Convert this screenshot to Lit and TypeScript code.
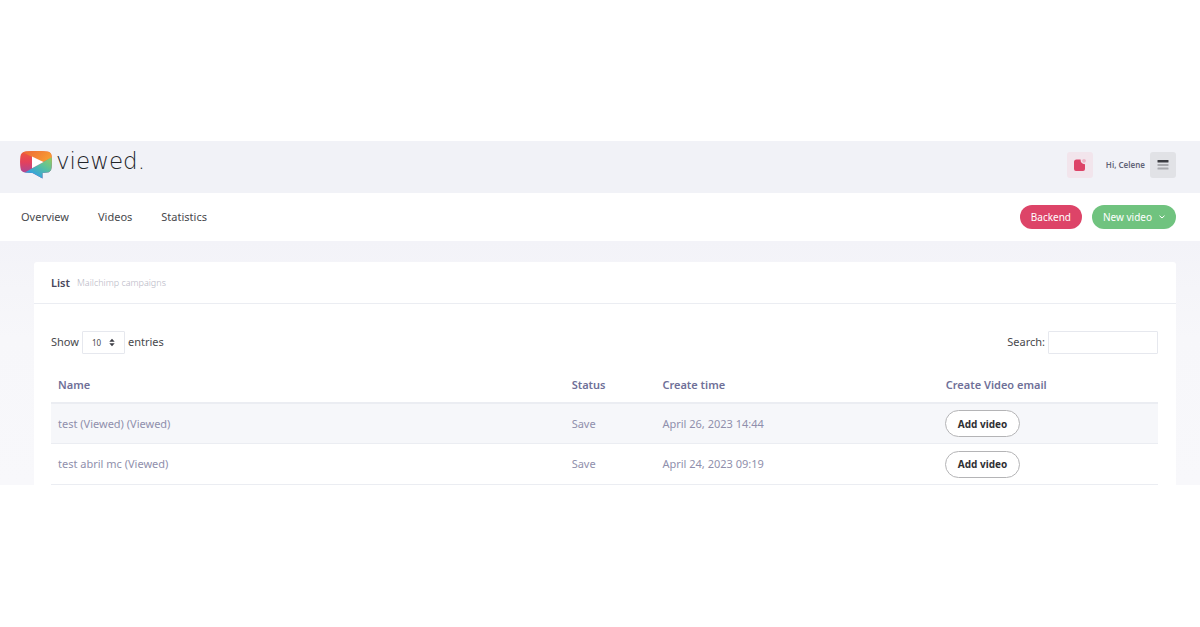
import { LitElement, html, css, svg } from "lit";
import { customElement, state } from "lit/decorators.js";

interface Campaign {
  name: string;
  status: string;
  created: string;
}

const logo = svg`
  <svg class="mark" viewBox="0 0 32 28" width="32" height="28" aria-hidden="true">
    <defs>
      <clipPath id="bubble">
        <path d="M6 0.6 Q16 -0.6 26 0.4 Q31.5 0.6 31.6 5 Q32.2 11 31.6 16.5 Q31.2 21.2 27 21.6 L22.5 22 L22.5 27.6 L12.5 21.9 L5 21.5 Q0.8 21 0.4 16.5 Q-0.3 11 0.4 5.5 Q0.8 1.2 6 0.6 Z" />
      </clipPath>
      <linearGradient id="left" x1="0" y1="0" x2="0" y2="1">
        <stop offset="0" stop-color="#ee5a3a" />
        <stop offset="0.4" stop-color="#e4405c" />
        <stop offset="0.8" stop-color="#a8489a" />
      </linearGradient>
      <linearGradient id="top" x1="0" y1="0" x2="1" y2="0.3">
        <stop offset="0" stop-color="#ec6236" />
        <stop offset="1" stop-color="#f79a33" />
      </linearGradient>
      <linearGradient id="bottom" x1="1" y1="0" x2="0.2" y2="1">
        <stop offset="0" stop-color="#9bcb5b" />
        <stop offset="0.4" stop-color="#5cc29a" />
        <stop offset="0.8" stop-color="#35a3dc" />
      </linearGradient>
    </defs>
    <g clip-path="url(#bubble)">
      <rect width="32" height="28" fill="url(#left)" />
      <path d="M0 0 H32 V6.5 L23 11 L3 1.5 Z" fill="url(#top)" />
      <path d="M32 6 L4 22 L12 28 H32 Z" fill="url(#bottom)" />
    </g>
    <path d="M12 5.5 L23.5 11 L12 17.3 Z" fill="#fff" />
  </svg>`;

@customElement("app-root")
export class AppRoot extends LitElement {
  @state() private campaigns: Campaign[] = [
    { name: "test (Viewed) (Viewed)", status: "Save", created: "April 26, 2023 14:44" },
    { name: "test abril mc (Viewed)", status: "Save", created: "April 24, 2023 09:19" },
  ];

  static styles = css`
    :host {
      display: block;
      padding: 141px 0;
      background: #fff;
      color: #48484c;
      font: 11px/16px "Noto Sans", "Open Sans", sans-serif;
    }
    * { box-sizing: border-box; }
    button, input, select { font: inherit; margin: 0; }
    .top {
      display: flex;
      align-items: center;
      justify-content: space-between;
      height: 52px;
      padding: 0 24px 4px 20px;
      background: #f1f2f7;
    }
    .brand {
      display: flex;
      align-items: center;
      gap: 4px;
      height: 32px;
      color: #222328;
      text-decoration: none;
    }
    .mark { display: block; }
    .word {
      padding-bottom: 8px;
      font: 200 23px/24px "DejaVu Sans Light", "DejaVu Sans", sans-serif;
    }
    .user { display: flex; align-items: center; gap: 5px; }
    .tile {
      display: grid;
      place-items: center;
      width: 26px;
      height: 26px;
      padding: 0;
      border: 0;
      border-radius: 3px;
      background: #e1e2e6;
    }
    .alert { margin-right: 8px; background: #f2e5ec; }
    .hello { color: #626477; font-size: 8px; font-weight: 600; }
    .bar {
      display: flex;
      align-items: center;
      justify-content: space-between;
      height: 48px;
      padding: 0 24px 0 21px;
    }
    .links { display: flex; gap: 29px; }
    .links a { color: #48484c; text-decoration: none; }
    .actions { display: flex; gap: 10px; }
    .pill {
      display: flex;
      align-items: center;
      gap: 7px;
      height: 24px;
      padding: 0 11px;
      border: 0;
      border-radius: 12px;
      color: #fff;
      background: #dd4468;
      font-size: 10px;
    }
    .green { background: #70c37f; }
    .content {
      padding: 21px 24px 0 34px;
      background: linear-gradient(#f3f3f8, #f7f7fa 40%, #f8f8fb);
    }
    .card { border-radius: 3px 3px 0 0; background: #fff; }
    .title {
      display: flex;
      align-items: center;
      gap: 7px;
      height: 42px;
      padding: 0 17px;
      border-bottom: 1px solid #ebedf2;
    }
    h1 { margin: 0; color: #48465b; font-size: 11px; line-height: 16px; font-weight: 600; }
    .sub { color: #b5b5c3; font-size: 9px; font-weight: 300; }
    .body { padding: 27px 18px 0 17px; }
    .tools { display: flex; justify-content: space-between; }
    .tools label { display: flex; align-items: center; gap: 3px; }
    .tools label > span:not(.select) { padding-bottom: 2px; }
    .select { position: relative; display: flex; }
    select, input {
      height: 23px;
      border: 1px solid #e6e8ee;
      border-radius: 1px;
      background: #fff;
      color: #48484c;
    }
    select { appearance: none; width: 43px; padding: 0 0 0 9px; font-size: 8px; }
    .arrows { position: absolute; right: 10px; top: 7px; pointer-events: none; }
    input { width: 110px; padding: 0 6px; }
    table {
      width: 100%;
      margin-top: 14px;
      border-collapse: separate;
      border-spacing: 0;
      table-layout: fixed;
    }
    .c-name { width: 46.4%; }
    .c-status { width: 8.2%; }
    .c-time { width: 25.6%; }
    th, td { padding: 0 7px; text-align: left; }
    th {
      height: 36px;
      color: #6f7098;
      font-weight: 600;
      border-bottom: 2px solid #ebedf2;
    }
    td {
      height: 40px;
      color: #8f8fac;
      border-bottom: 1px solid #ebedf2;
    }
    tbody tr:nth-child(odd) td { background: #f6f7fa; }
    tbody tr:last-child td { height: 41px; }
    .add {
      display: block;
      height: 27px;
      margin-left: -1px;
      padding: 0 12px;
      border: 1px solid #b4b4b6;
      border-radius: 14px;
      background: #fff;
      color: #303033;
      font-size: 10px;
      font-weight: 700;
    }
  `;

  render() {
    return html`
      <header class="top">
        <a class="brand" href="#" aria-label="viewed">${logo}<span class="word">viewed.</span></a>
        <div class="user">
          <button class="tile alert" aria-label="Notifications">
            <svg width="14" height="14" viewBox="0 0 14 14">
              <path d="M3.5 1.5 H7.6 Q7.3 5.8 12 6.2 V11 Q12 13 10 13 H3 Q1 13 1 11 V4 Q1 1.5 3.5 1.5 Z" fill="#dd4468" />
              <circle cx="11" cy="2.8" r="1.9" fill="#edb4c6" />
            </svg>
          </button>
          <span class="hello">Hi, Celene</span>
          <button class="tile" aria-label="Menu">
            <svg width="12" height="12" viewBox="0 0 12 12">
              <rect x="0.5" y="1" width="11" height="2.5" rx="0.5" fill="#3c3d42" />
              <rect x="0.5" y="5" width="11" height="2" rx="0.5" fill="#a9aaae" />
              <rect x="0.5" y="8.5" width="11" height="2" rx="0.5" fill="#a9aaae" />
            </svg>
          </button>
        </div>
      </header>
      <div class="bar">
        <nav class="links">
          <a href="#overview">Overview</a>
          <a href="#videos">Videos</a>
          <a href="#statistics">Statistics</a>
        </nav>
        <div class="actions">
          <button class="pill">Backend</button>
          <button class="pill green">
            New video
            <svg width="6" height="4" viewBox="0 0 6 4">
              <path d="M0.5 0.7 L3 3 L5.5 0.7" fill="none" stroke="#fff" />
            </svg>
          </button>
        </div>
      </div>
      <main class="content">
        <section class="card">
          <div class="title"><h1>List</h1><span class="sub">Mailchimp campaigns</span></div>
          <div class="body">
            <div class="tools">
              <label>
                <span>Show</span>
                <span class="select">
                  <select><option>10</option><option>25</option><option>50</option></select>
                  <svg class="arrows" width="6" height="9" viewBox="0 0 6 9">
                    <path d="M0.3 3.8 L3 0.8 L5.7 3.8 Z M0.3 5.2 L3 8.2 L5.7 5.2 Z" fill="#3c3d44" />
                  </svg>
                </span>
                <span>entries</span>
              </label>
              <label><span>Search:</span> <input type="search" /></label>
            </div>
            <table>
              <thead>
                <tr>
                  <th class="c-name">Name</th>
                  <th class="c-status">Status</th>
                  <th class="c-time">Create time</th>
                  <th>Create Video email</th>
                </tr>
              </thead>
              <tbody>
                ${this.campaigns.map(
                  (c) => html`<tr>
                    <td>${c.name}</td>
                    <td>${c.status}</td>
                    <td>${c.created}</td>
                    <td><button class="add">Add video</button></td>
                  </tr>`
                )}
              </tbody>
            </table>
          </div>
        </section>
      </main>
    `;
  }
}
